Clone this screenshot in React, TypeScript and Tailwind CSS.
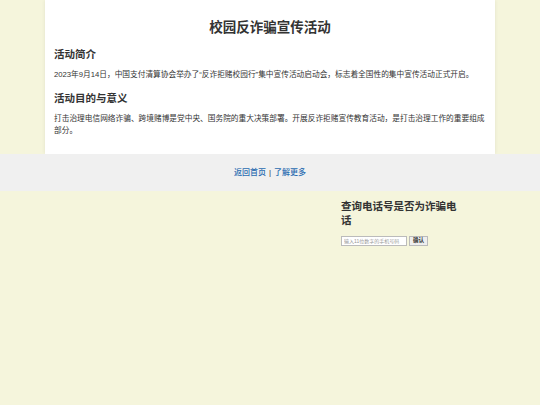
export default function App() {
  return (
    <div
      className="min-h-[405px] bg-[#f5f5dc] text-[#333]"
      style={{ fontFamily: '"Liberation Sans", "Noto Sans CJK SC", sans-serif' }}
    >
      {/* main card */}
      <div className="mx-auto w-[450px] bg-white px-[9px] pt-[16px] pb-[17px] shadow-[0_0_4px_rgba(0,0,0,0.08)]">
        <h1 className="text-center text-[13.5px] font-bold leading-[24px]">校园反诈骗宣传活动</h1>
        <h2 className="mt-[6px] text-[10.5px] font-bold leading-[16px]">活动简介</h2>
        <p className="mt-[7px] text-[7.7px] leading-[12px]">
          2023年9月14日，中国支付清算协会举办了“反诈拒赌校园行”集中宣传活动启动会，标志着全国性的集中宣传活动正式开启。
        </p>
        <h2 className="mt-[9px] text-[10.5px] font-bold leading-[16px]">活动目的与意义</h2>
        <p className="mt-[7px] text-[7.7px] leading-[12px]">
          打击治理电信网络诈骗、跨境赌博是党中央、国务院的重大决策部署。开展反诈拒赌宣传教育活动，是打击治理工作的重要组成部分。
        </p>
      </div>

      {/* footer links */}
      <div className="flex h-[37px] items-center justify-center bg-[#f0f0f0] text-[8px] font-medium">
        <a className="text-[#2a6cb0]" href="#">返回首页</a>
        <span className="mx-[3px]">|</span>
        <a className="text-[#2a6cb0]" href="#">了解更多</a>
      </div>

      {/* phone check */}
      <div className="flex justify-end pr-[79px] pt-[8px]">
        <div className="w-[120px]">
          <h3 className="text-[10.5px] font-bold leading-[14px]">查询电话号是否为诈骗电话</h3>
          <div className="mt-[9px] flex items-center gap-[2px]">
            <input
              className="h-[10px] w-[66px] border border-[#bbb] bg-white px-[2px] text-[5px] placeholder:text-[#999]"
              placeholder="输入11位数字的手机号码"
            />
            <button className="h-[10px] border border-[#bbb] bg-[#eee] px-[3px] text-[5.5px] leading-none font-bold">
              确认
            </button>
          </div>
        </div>
      </div>
    </div>
  );
}
